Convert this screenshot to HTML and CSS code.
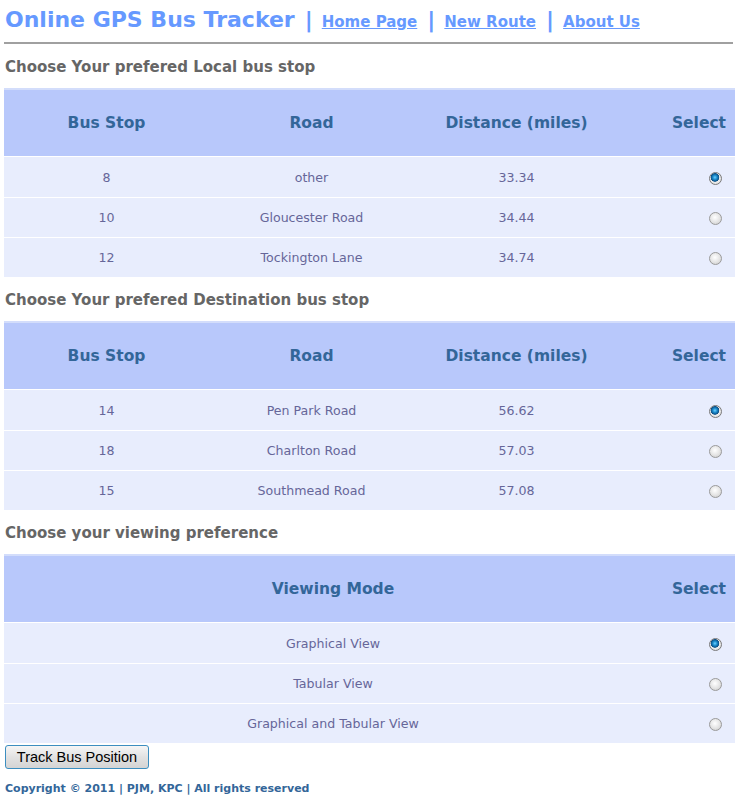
FILE: index.html
```html
<!DOCTYPE html>
<html>
<head>
<meta charset="utf-8">
<title>Online GPS Bus Tracker</title>
<link rel="stylesheet" href="styles.css">
</head>
<body>
<div class="page">
  <div class="topbar">
    <span class="site-title">Online GPS Bus Tracker</span>
    <span class="sep">|</span>
    <a class="nav-link" href="#">Home Page</a>
    <span class="sep">|</span>
    <a class="nav-link" href="#">New Route</a>
    <span class="sep">|</span>
    <a class="nav-link" href="#">About Us</a>
  </div>
  <div class="rule"></div>

  <h2 class="section-title">Choose Your prefered Local bus stop</h2>
  <table class="grid">
    <thead>
      <tr><th class="c1">Bus Stop</th><th class="c2">Road</th><th class="c3">Distance (miles)</th><th class="sel">Select</th></tr>
    </thead>
    <tbody>
      <tr><td>8</td><td>other</td><td>33.34</td><td class="sel"><input type="radio" name="local" checked></td></tr>
      <tr><td>10</td><td>Gloucester Road</td><td>34.44</td><td class="sel"><input type="radio" name="local"></td></tr>
      <tr><td>12</td><td>Tockington Lane</td><td>34.74</td><td class="sel"><input type="radio" name="local"></td></tr>
    </tbody>
  </table>

  <h2 class="section-title">Choose Your prefered Destination bus stop</h2>
  <table class="grid">
    <thead>
      <tr><th class="c1">Bus Stop</th><th class="c2">Road</th><th class="c3">Distance (miles)</th><th class="sel">Select</th></tr>
    </thead>
    <tbody>
      <tr><td>14</td><td>Pen Park Road</td><td>56.62</td><td class="sel"><input type="radio" name="dest" checked></td></tr>
      <tr><td>18</td><td>Charlton Road</td><td>57.03</td><td class="sel"><input type="radio" name="dest"></td></tr>
      <tr><td>15</td><td>Southmead Road</td><td>57.08</td><td class="sel"><input type="radio" name="dest"></td></tr>
    </tbody>
  </table>

  <h2 class="section-title">Choose your viewing preference</h2>
  <table class="grid">
    <thead>
      <tr><th class="mode">Viewing Mode</th><th class="sel">Select</th></tr>
    </thead>
    <tbody>
      <tr><td>Graphical View</td><td class="sel"><input type="radio" name="view" checked></td></tr>
      <tr><td>Tabular View</td><td class="sel"><input type="radio" name="view"></td></tr>
      <tr><td>Graphical and Tabular View</td><td class="sel"><input type="radio" name="view"></td></tr>
    </tbody>
  </table>

  <button class="track-btn" type="button">Track Bus Position</button>

  <p class="copyright">Copyright © 2011 | PJM, KPC | All rights reserved</p>
</div>
</body>
</html>
```

FILE: styles.css
```css
html, body {
  margin: 0;
  padding: 0;
  background: #ffffff;
}

body {
  font-family: "DejaVu Sans", Verdana, sans-serif;
}

.page {
  padding: 0 5px 0 4px;
}

.topbar {
  display: flex;
  align-items: baseline;
  height: 40px;
  padding-left: 1px;
  padding-top: 7px;
  box-sizing: border-box;
}

.site-title {
  font-size: 22px;
  font-weight: bold;
  color: #6699ff;
}

.sep {
  font-size: 22px;
  font-weight: bold;
  color: #6699ff;
  margin: 0 9px 0 10px;
}

.nav-link {
  font-size: 15px;
  font-weight: bold;
  color: #6699ff;
  text-decoration: underline;
}

.rule {
  height: 2px;
  background: #a0a0a0;
  margin: 2px 2px 0 0;
}

.section-title {
  margin: 0;
  padding: 12px 0 0 1px;
  height: 44px;
  box-sizing: border-box;
  line-height: 22px;
  font-size: 15px;
  font-weight: bold;
  color: #666666;
}

.grid {
  width: 100%;
  border-collapse: separate;
  border-spacing: 0;
  border-top: 2px solid #d3ddfb;
}

.grid th {
  background: #b8c8fb;
  color: #336699;
  font-size: 15.5px;
  font-weight: bold;
  height: 66px;
  padding: 0;
  border-bottom: 1px solid #ffffff;
  text-align: center;
}

.grid th.c1, .grid th.c2, .grid th.c3 {
  width: 205px;
}

.grid th.mode {
  width: 658px;
}

.grid td {
  background: #e8edfd;
  color: #666699;
  font-size: 12.6px;
  text-align: center;
  height: 39px;
  padding: 0;
  border-bottom: 1px solid #ffffff;
}

.grid tbody tr:first-child td {
  height: 40px;
}

.grid tbody tr:last-child td {
  border-bottom: none;
}

.grid .sel {
  text-align: right;
  padding-right: 9px;
}

.grid td.sel {
  padding-right: 13px;
}

.grid input[type="radio"] {
  appearance: none;
  -webkit-appearance: none;
  width: 13px;
  height: 13px;
  margin: 0;
  border-radius: 50%;
  border: 1px solid #9a9a9a;
  background: radial-gradient(circle at 45% 40%, #ffffff 0%, #e6e6e6 50%, #c8c8c8 100%);
  box-sizing: border-box;
  vertical-align: middle;
}

.grid input[type="radio"]:checked {
  background:
    radial-gradient(circle at 45% 40%, #6fd0ff 0px, #1d8fd0 2px, #0b4f86 4px, transparent 4.6px),
    radial-gradient(circle at 50% 50%, #ffffff 0%, #e8e8e8 60%, #c8c8c8 100%);
  border-color: #7a7a7a;
}

.track-btn {
  display: block;
  margin: 2px 0 0 1px;
  width: 144px;
  height: 24px;
  padding: 0;
  font-family: "Liberation Sans", Arial, sans-serif;
  font-size: 14.5px;
  color: #000000;
  border: 1px solid #3c8ec0;
  border-radius: 3px;
  background: linear-gradient(#f6f6f6, #e2e2e2 50%, #d4d4d4);
}

.copyright {
  margin: 13px 0 0 1px;
  font-size: 11px;
  font-weight: bold;
  color: #336699;
}
```
